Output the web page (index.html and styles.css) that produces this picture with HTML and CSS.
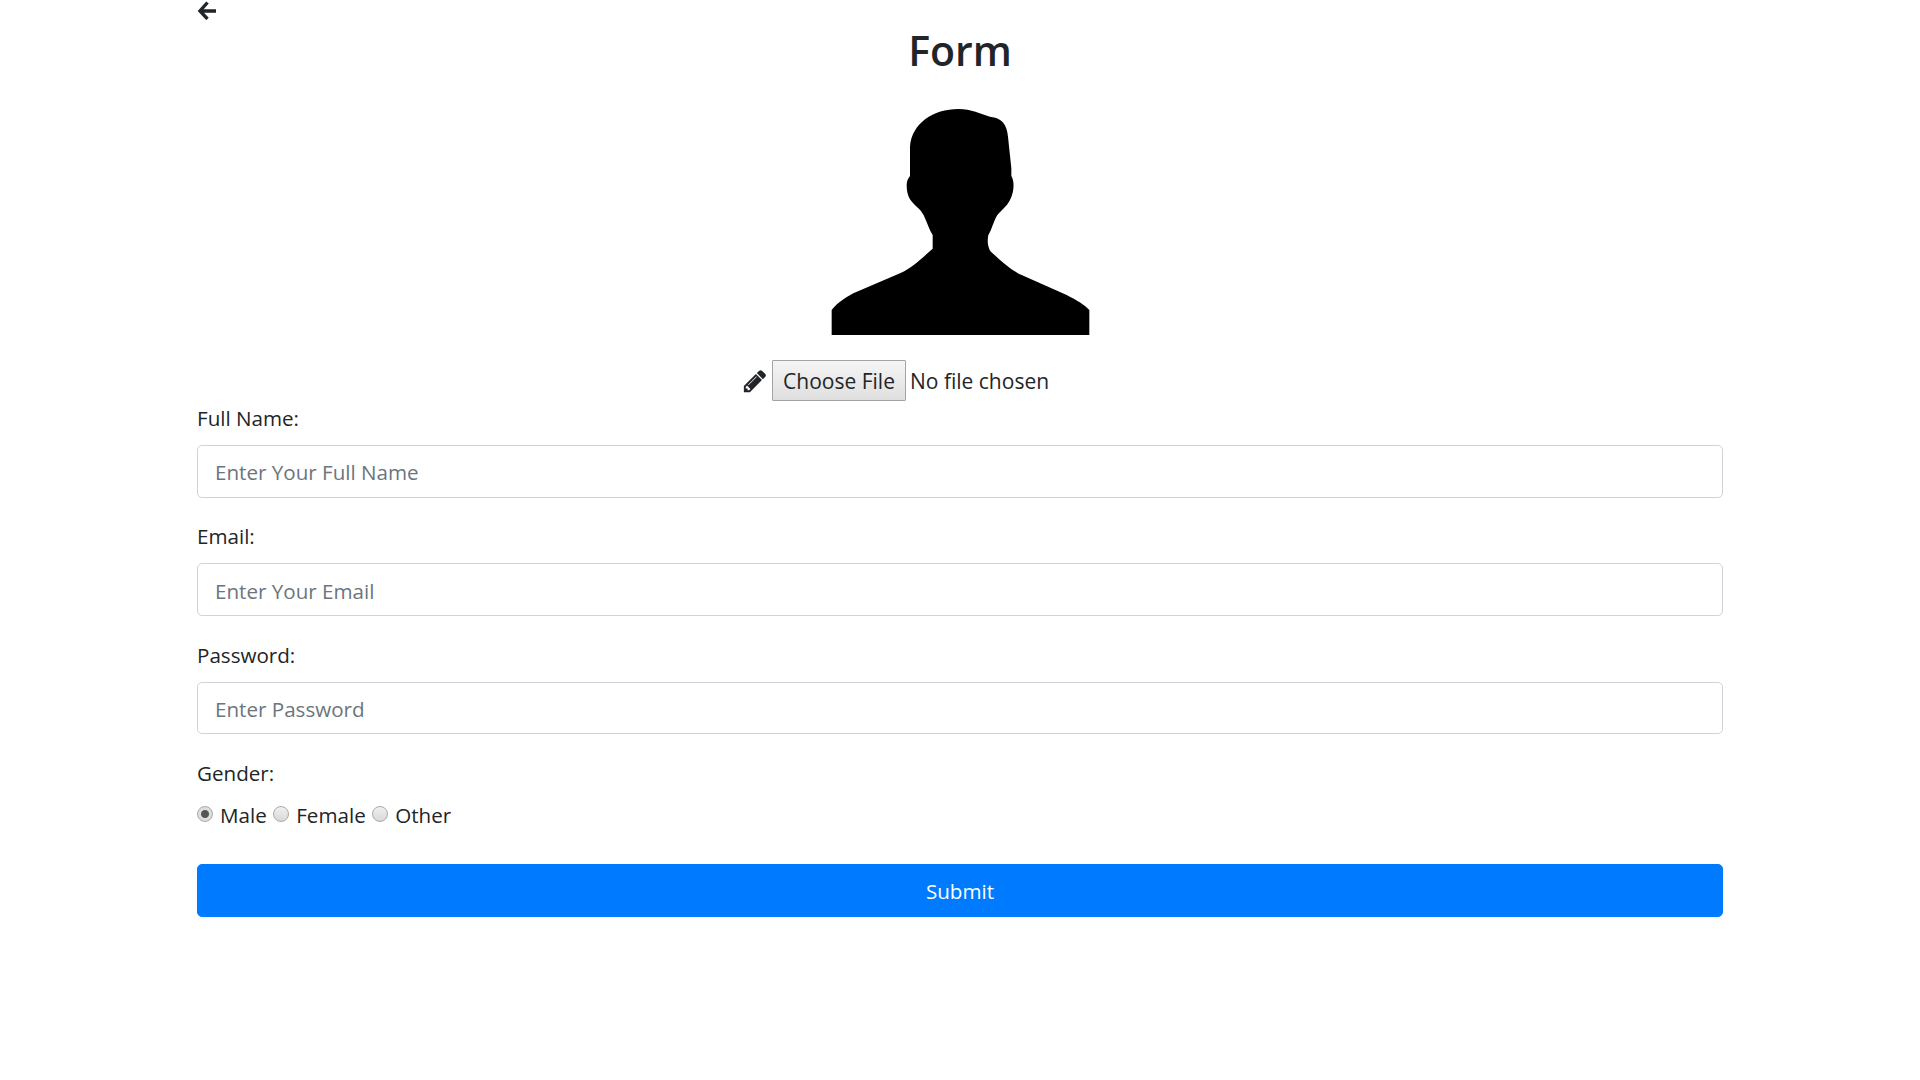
FILE: index.html
```html
<!DOCTYPE html>
<html lang="en">
<head>
<meta charset="utf-8">
<title>Form</title>
<link rel="stylesheet" href="styles.css">
</head>
<body>
<main class="container">
  <a class="back" href="#" aria-label="Back">
    <svg class="back-icon" viewBox="0 0 20 20" width="20" height="20"><path d="M10.500 2.500 3 11l7.500 8M3 11h16" fill="none" stroke="#212529" stroke-width="3.400"/></svg>
  </a>
  <h1 class="title">Form</h1>
  <div class="avatar">
    <svg viewBox="0 0 900 780" width="300" height="260"><path fill="#000" d="M65 735V660C85 635 110 622 130 610L270 550C310 532 340 500 368 476V435C358 420 352 400 345 385C340 372 335 365 325 355C305 335 290 325 290 285C290 272 295 265 300 258V170C305 100 370 57 445 57C485 57 510 72 540 80C575 84 590 100 594 140L604 235V258C612 270 615 300 600 330C590 350 575 360 562 375C550 395 545 420 535 435C532 450 532 465 540 482C570 510 600 540 635 555L770 615C800 630 825 645 838 660V735Z"/></svg>
  </div>
  <div class="file-row">
    <svg class="pencil" viewBox="0 0 1792 1792" width="26" height="26"><path fill="#212529" d="M491 1536l91-91-235-235-91 91v107h128v128h107zm523-928q0-22-22-22-10 0-17 7l-542 542q-7 7-7 17 0 22 22 22 10 0 17-7l542-542q7-7 7-17zm-54-192l416 416-832 832h-416v-416zm683 96q0 53-37 90l-166 166-416-416 166-165q36-38 90-38 53 0 91 38l235 234q37 39 37 91z"/></svg>
    <button class="file-btn" type="button">Choose File</button>
    <span class="file-name">No file chosen</span>
  </div>
  <form class="form">
    <div class="field">
      <label class="label" for="name">Full Name:</label>
      <input class="input" id="name" type="text" placeholder="Enter Your Full Name">
    </div>
    <div class="field">
      <label class="label" for="email">Email:</label>
      <input class="input" id="email" type="text" placeholder="Enter Your Email">
    </div>
    <div class="field">
      <label class="label" for="password">Password:</label>
      <input class="input" id="password" type="text" placeholder="Enter Password">
    </div>
    <div class="label gender">Gender:</div>
    <div class="radios">
      <label class="radio-item"><input class="radio" type="radio" name="g" checked>Male</label>
      <label class="radio-item"><input class="radio" type="radio" name="g">Female</label>
      <label class="radio-item"><input class="radio" type="radio" name="g">Other</label>
    </div>
    <button class="submit" type="button">Submit</button>
  </form>
</main>
</body>
</html>
```
FILE: styles.css
```css
* { box-sizing: border-box; }
html, body { margin: 0; padding: 0; background: #fff; }
body {
  font-family: "Open Sans", "Noto Sans", sans-serif;
  font-size: 20.6px;
  color: #212529;
  line-height: 30px;
}
.container { width: 1526px; margin: 0 auto; }
.back { display: block; height: 20px; }
.back-icon { display: block; }
.title {
  margin: 0;
  height: 70px;
  line-height: 60px;
  font-size: 41px;
  font-weight: 600;
  text-align: center;
}
.avatar { display: flex; justify-content: center; height: 260px; }
.file-row {
  margin-top: 10px;
  height: 41px;
  display: flex;
  justify-content: center;
  align-items: center;
}
.pencil { margin-right: 4px; }
.file-btn {
  height: 41px;
  width: 134px;
  padding: 0;
  font: inherit;
  font-size: 21px;
  color: #212529;
  border: 1px solid #a3a3a3;
  border-radius: 1px;
  background: linear-gradient(#f5f5f5, #dfdfdf);
}
.file-name { margin-left: 4px; width: 268px; font-size: 21px; }
.form { margin-top: 2px; }
.field { margin-bottom: 23.75px; }
.label { display: block; height: 30px; margin-bottom: 12px; }
.gender { margin-top: 0; }
.input {
  display: block;
  width: 100%;
  height: 52.5px;
  padding: 2px 17px 0;
  font: inherit;
  color: #495057;
  border: 1px solid #ced4da;
  border-radius: 5px;
  background: #fff;
}
.input::placeholder { color: #6c757d; opacity: 1; }
.radios { display: flex; height: 30px; gap: 6.5px; margin-top: 7.5px; }
.radio-item { display: flex; align-items: center; }
.radio {
  appearance: none;
  width: 16px;
  height: 16px;
  margin: 0 7px 2px 0;
  border: 1px solid #a9a9a9;
  border-radius: 50%;
  background: linear-gradient(#f0f0f0, #d8d8d8);
}
.radio:checked { background: radial-gradient(circle, #555 0 3.5px, #dedede 4.5px); }
.submit {
  display: block;
  width: 100%;
  height: 52.5px;
  margin-top: 34.5px;
  padding: 0;
  font: inherit;
  color: #fff;
  background: #007bff;
  border: 1px solid #007bff;
  border-radius: 5px;
}
```
